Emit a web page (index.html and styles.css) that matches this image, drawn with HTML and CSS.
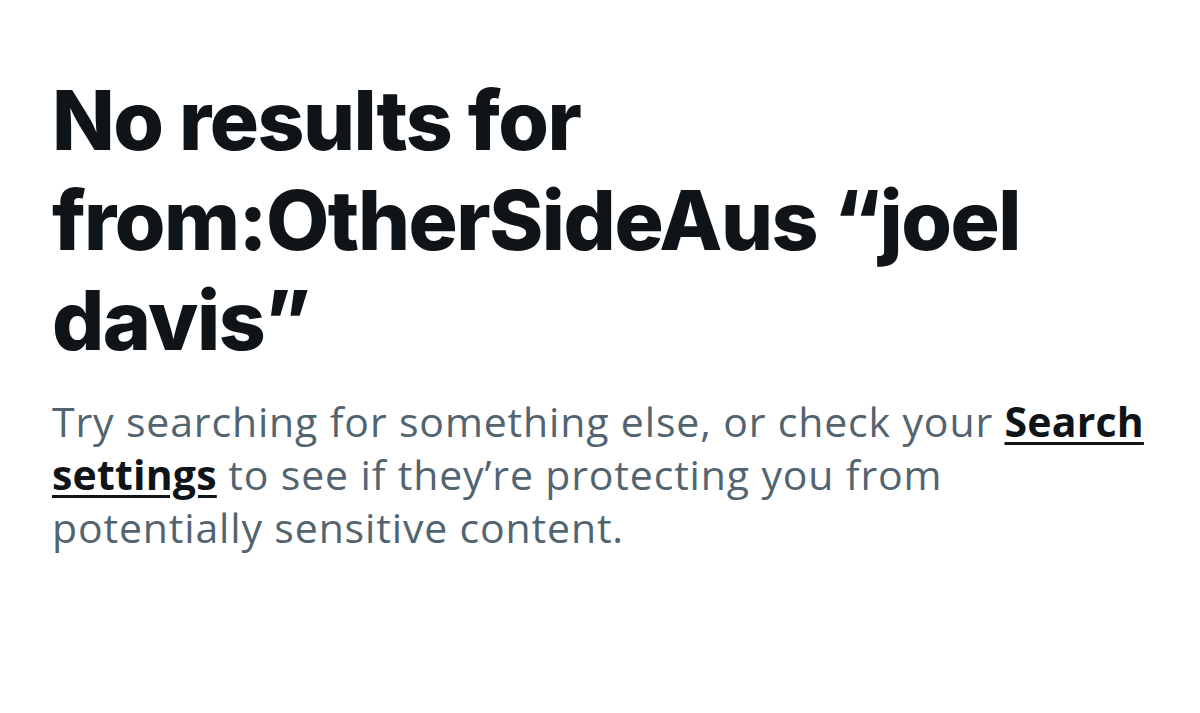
FILE: index.html
```html
<!DOCTYPE html>
<html lang="en">
<head>
<meta charset="utf-8">
<title>No results</title>
<link rel="stylesheet" href="styles.css">
</head>
<body>
<main class="empty">
  <h1 class="empty-title">No results for from:OtherSideAus “joel davis”</h1>
  <p class="empty-text">Try searching for something else, or check your <a class="empty-link" href="#">Search settings</a> to see if they’re protecting you from potentially sensitive content.</p>
</main>
</body>
</html>
```

FILE: styles.css
```css
html, body {
  margin: 0;
  padding: 0;
  background: #ffffff;
}
body {
  width: 1200px;
  height: 713px;
  overflow: hidden;
}
.empty {
  padding: 71px 48px 0 52px;
  box-sizing: border-box;
  width: 1200px;
}
.empty-title {
  margin: 0;
  font-family: Inter, "Liberation Sans", sans-serif;
  font-weight: 800;
  font-size: 82px;
  line-height: 100px;
  letter-spacing: -1.5px;
  color: #0f1419;
  max-width: 1000px;
}
.empty-text {
  margin: 24px 0 0 0;
  font-family: "Open Sans", "Liberation Sans", sans-serif;
  font-weight: 400;
  font-size: 41px;
  line-height: 53px;
  letter-spacing: 0.85px;
  color: #536471;
}
.empty-link {
  color: #0f1419;
  font-weight: 700;
  letter-spacing: 0.2px;
  text-decoration: underline;
  text-decoration-thickness: 3px;
  text-underline-offset: 5px;
}
```
